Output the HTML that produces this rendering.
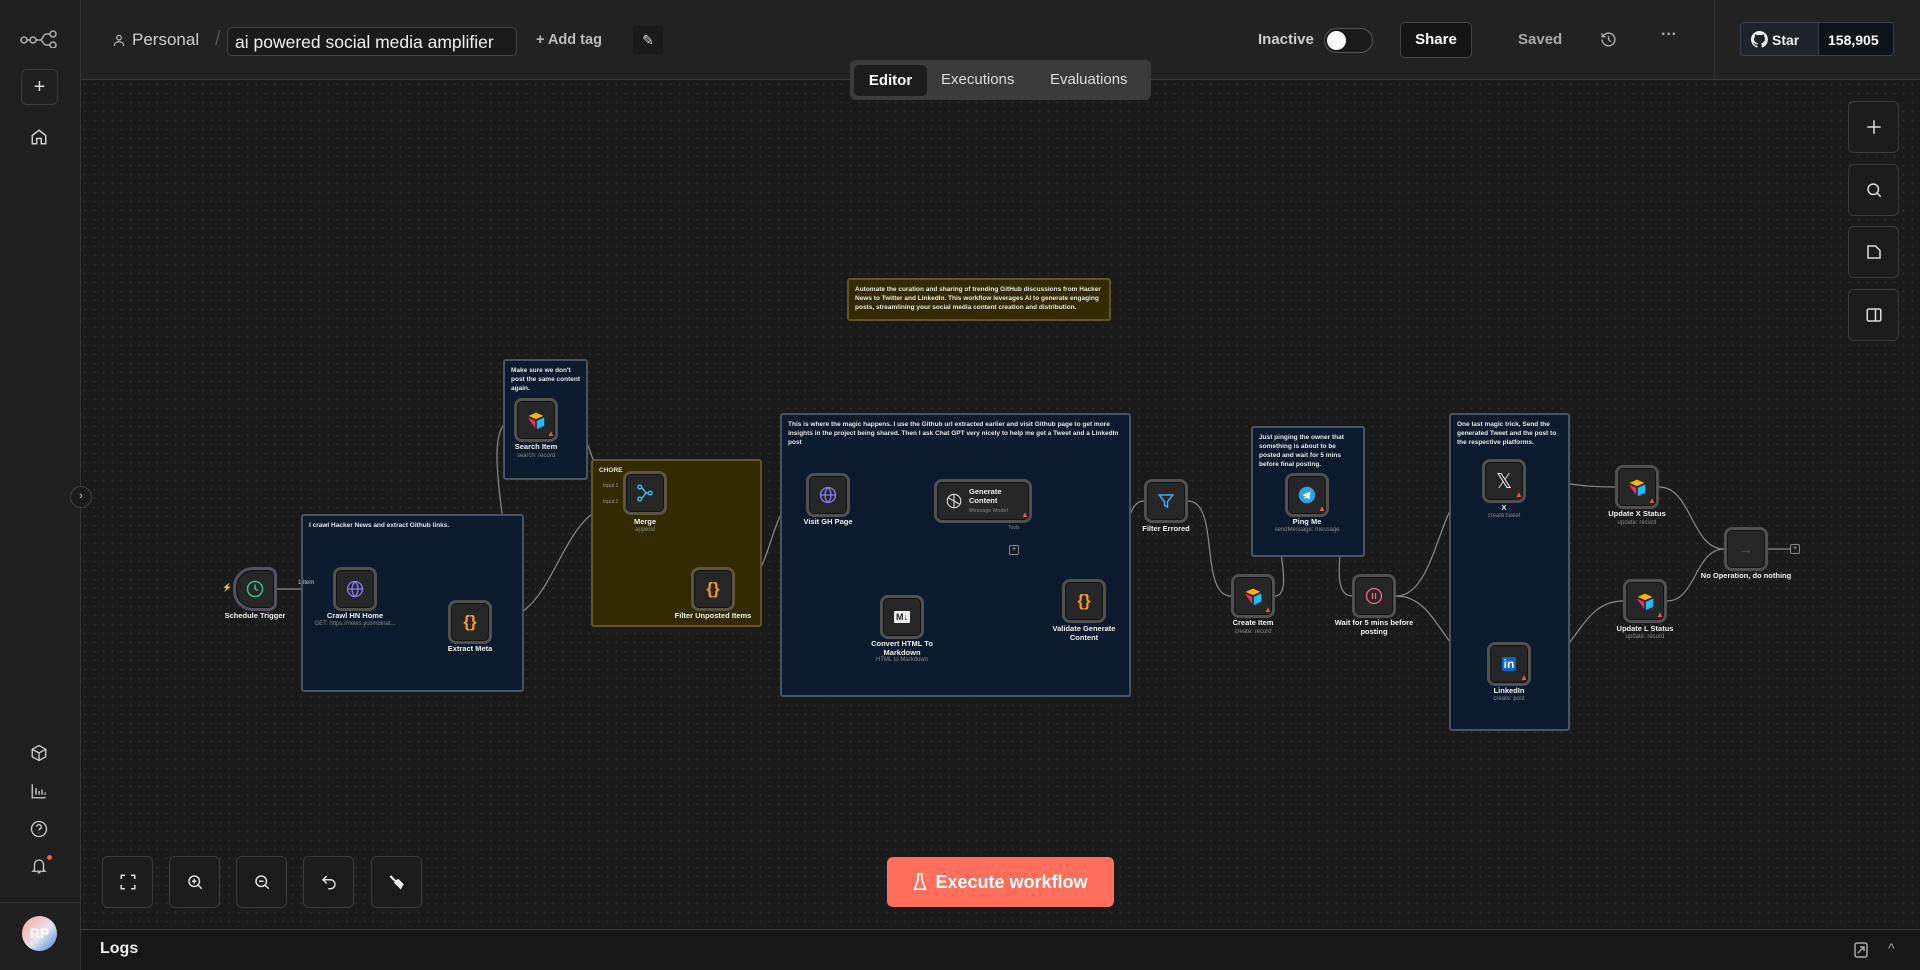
<!DOCTYPE html>
<html><head><meta charset="utf-8"><style>
*{box-sizing:border-box;margin:0;padding:0}
body{width:1920px;height:970px;overflow:hidden;background:#1b1b1b;font-family:"Liberation Sans",sans-serif;color:#ddd;position:relative}
.canvas{position:absolute;left:81px;top:80px;right:0;bottom:41px;background-color:#1a1a1a;background-image:radial-gradient(circle,#2e2e2e 0.8px,transparent 1px);background-size:9px 9px}
.side{position:absolute;left:0;top:0;width:81px;height:970px;background:#1f1f1f;border-right:1px solid #333}
.top{position:absolute;left:81px;top:0;right:0;height:80px;background:#222;border-bottom:1px solid #3a3a3a}
.logs{position:absolute;left:81px;right:0;top:929px;bottom:0;background:#171717;border-top:1px solid #3a3a3a}
.abs{position:absolute}
.btn{position:absolute;border:1px solid #3a3a3a;border-radius:6px;background:#1b1b1b;display:flex;align-items:center;justify-content:center}
.sticky{position:absolute;border:2px solid #4a5360;border-radius:3px;background:#0b1a2c;color:#e8e8e8;font-size:6.5px;line-height:9px;padding:5px 6px;font-weight:bold}
.sticky.y{background:#342a02;border-color:#5f5525}
.n{position:absolute;width:44px;height:44px;margin:-22px 0 0 -22px;border:3px solid #505050;border-radius:8px;background:#262626;box-shadow:inset 0 0 0 1px #111;display:flex;align-items:center;justify-content:center}
.n.c{border-color:#5a5440}
.l{position:absolute;transform:translateX(-50%);font-size:7.5px;font-weight:bold;color:#f0f0f0;white-space:nowrap;text-align:center;line-height:9px}
.s{position:absolute;transform:translateX(-50%);font-size:6px;color:#8a8a8a;white-space:nowrap}
.w{position:absolute;font-size:8px;color:#e55}
</style></head><body>
<div class="canvas"></div>
<svg class="abs" style="left:0;top:0" width="1920" height="970" fill="none" stroke="#8a8a8a" stroke-width="1.2">
<path d="M277 589 L333 589"/>
<path d="M377 589 C412 589,413 622,448 622"/>
<path d="M492 622 C540 622,466 420,514 420"/>
<path d="M492 622 C560 622,556 503,623 503"/>
<path d="M558 420 C600 420,582 487,623 487"/>
<path d="M667 493 C700 493,658 589,691 589"/>
<path d="M735 589 C775 589,766 495,806 495"/>
<path d="M850 495 C880 495,850 617,880 617"/>
<path d="M924 617 C954 617,904 501,934 501"/>
<path d="M1032 501 C1062 501,1032 601,1062 601"/>
<path d="M1106 601 C1136 601,1114 501,1144 501"/>
<path d="M1188 501 C1220 501,1199 596,1231 596"/>
<path d="M1275 596 C1300 596,1260 495,1285 495"/>
<path d="M1329 495 C1360 495,1321 596,1352 596"/>
<path d="M1396 596 C1440 596,1438 481,1482 481"/>
<path d="M1396 596 C1440 596,1443 664,1487 664"/>
<path d="M1526 481 C1570 481,1571 487,1615 487"/>
<path d="M1531 664 C1577 664,1577 601,1623 601"/>
<path d="M1659 487 C1692 487,1691 549,1724 549"/>
<path d="M1667 601 C1696 601,1695 549,1724 549"/>
<path d="M1768 549 L1790 549"/>
<path d="M1014 523 L1014 548"/>
</svg>

<!-- sticky notes -->
<div class="sticky y" style="left:847px;top:278px;width:264px;height:43px">Automate the curation and sharing of trending GitHub discussions from Hacker News to Twitter and LinkedIn. This workflow leverages AI to generate engaging posts, streamlining your social media content creation and distribution.</div>
<div class="sticky" style="left:503px;top:359px;width:85px;height:121px">Make sure we don't post the same content again.</div>
<div class="sticky" style="left:301px;top:514px;width:223px;height:178px">I crawl Hacker News and extract Github links.</div>
<div class="sticky y" style="left:591px;top:459px;width:171px;height:168px">CHORE</div>
<div class="sticky" style="left:780px;top:413px;width:351px;height:284px">This is where the magic happens. I use the Github url extracted earlier and visit Github page to get more insights in the project being shared. Then I ask Chat GPT very nicely to help me get a Tweet and a LinkedIn post</div>
<div class="sticky" style="left:1251px;top:426px;width:114px;height:131px">Just pinging the owner that something is about to be posted and wait for 5 mins before final posting.</div>
<div class="sticky" style="left:1449px;top:413px;width:121px;height:318px">One last magic trick, Send the generated Tweet and the post to the respective platforms.</div>

<!-- nodes -->
<div class="n" style="left:255px;top:589px;border-radius:20px 8px 8px 20px;border-color:#565060"><svg width="18" height="18" viewBox="0 0 24 24" fill="none" stroke="#34c08a" stroke-width="2"><circle cx="12" cy="12" r="10"/><path d="M12 6v6l4 2"/></svg></div>
<div class="l" style="left:255px;top:611px">Schedule Trigger</div>
<div class="abs" style="left:298px;top:580px;font-size:6px;color:#ccc">1 item</div>
<div class="abs" style="left:222px;top:583px;font-size:8px;color:#e55">⚡</div>

<div class="n" style="left:355px;top:589px"><svg width="18" height="18" viewBox="0 0 24 24" fill="none" stroke="#8a7cf5" stroke-width="1.8"><circle cx="12" cy="12" r="10"/><path d="M2 12h20M12 2c3 3 4 7 4 10s-1 7-4 10c-3-3-4-7-4-10s1-7 4-10"/></svg></div>
<div class="l" style="left:355px;top:611px">Crawl HN Home</div><div class="s" style="left:355px;top:621px">GET: https://news.ycombinat...</div>

<div class="n" style="left:470px;top:622px"><span style="color:#ff9a1f;font-size:17px;font-weight:bold">{}</span></div>
<div class="l" style="left:470px;top:644px">Extract Meta</div>

<div class="n" style="left:536px;top:420px"><svg width="20" height="18" viewBox="0 0 24 22"><path d="M12 2l9 4-9 4-9-4z" fill="#fcb400"/><path d="M13 12l9-4v10l-9 4z" fill="#18bfff"/><path d="M2 8l9 4v9z" fill="#f82b60"/></svg><span class="w" style="left:30px;top:28px">▲</span></div>
<div class="l" style="left:536px;top:442px">Search Item</div><div class="s" style="left:536px;top:453px">search: record</div>

<div class="n c" style="left:645px;top:493px"><svg width="18" height="18" viewBox="0 0 24 24" fill="none" stroke="#3db8d8" stroke-width="2"><circle cx="5" cy="4" r="2.5"/><circle cx="5" cy="20" r="2.5"/><circle cx="19" cy="12" r="2.5"/><path d="M7 5c5 2 3 7 9 7M7 19c5-2 3-7 9-7"/></svg></div>
<div class="l" style="left:645px;top:517px">Merge</div><div class="s" style="left:645px;top:527px">append</div>
<div class="abs" style="left:603px;top:483px;font-size:5px;color:#999">Input 1</div>
<div class="abs" style="left:603px;top:499px;font-size:5px;color:#999">Input 2</div>

<div class="n c" style="left:713px;top:589px"><span style="color:#ff9a1f;font-size:17px;font-weight:bold">{}</span></div>
<div class="l" style="left:713px;top:611px">Filter Unposted Items</div>

<div class="n" style="left:828px;top:495px"><svg width="18" height="18" viewBox="0 0 24 24" fill="none" stroke="#8a7cf5" stroke-width="1.8"><circle cx="12" cy="12" r="10"/><path d="M2 12h20M12 2c3 3 4 7 4 10s-1 7-4 10c-3-3-4-7-4-10s1-7 4-10"/></svg></div>
<div class="l" style="left:828px;top:517px">Visit GH Page</div>

<div class="n" style="left:902px;top:617px"><span style="background:#eee;color:#222;font-size:9px;font-weight:bold;padding:1px 2px;border-radius:1px">M↓</span></div>
<div class="l" style="left:902px;top:639px">Convert HTML To<br>Markdown</div><div class="s" style="left:902px;top:657px">HTML to Markdown</div>

<div class="n" style="left:934px;top:479px;margin:0;width:98px;height:44px;justify-content:flex-start;padding-left:8px"><svg width="18" height="18" viewBox="0 0 24 24" fill="none" stroke="#ddd" stroke-width="1.5"><circle cx="12" cy="12" r="9"/><path d="M12 3v9l7 4M5 8l7 4M12 21v-9"/></svg><div style="margin-left:6px;font-size:7.5px;font-weight:bold;color:#eee;line-height:9px">Generate<br>Content<br><span style="font-size:5.5px;color:#888;font-weight:normal">Message Model</span></div><span class="w" style="left:84px;top:28px">▲</span></div>
<div class="abs" style="left:1008px;top:525px;font-size:5px;color:#888">Tools</div>
<div class="abs" style="left:1009px;top:545px;width:10px;height:10px;border:1px solid #888;border-radius:2px;font-size:7px;line-height:8px;text-align:center;color:#ccc">+</div>

<div class="n" style="left:1084px;top:601px"><span style="color:#ff9a1f;font-size:17px;font-weight:bold">{}</span></div>
<div class="l" style="left:1084px;top:624px">Validate Generate<br>Content</div>

<div class="n" style="left:1166px;top:501px"><svg width="18" height="18" viewBox="0 0 24 24" fill="none" stroke="#4ba6f5" stroke-width="2"><path d="M3 4h18l-7 9v7l-4-2v-5z"/></svg></div>
<div class="l" style="left:1166px;top:524px">Filter Errored</div>

<div class="n" style="left:1253px;top:596px"><svg width="20" height="18" viewBox="0 0 24 22"><path d="M12 2l9 4-9 4-9-4z" fill="#fcb400"/><path d="M13 12l9-4v10l-9 4z" fill="#18bfff"/><path d="M2 8l9 4v9z" fill="#f82b60"/></svg><span class="w" style="left:30px;top:28px">▲</span></div>
<div class="l" style="left:1253px;top:618px">Create Item</div><div class="s" style="left:1253px;top:629px">create: record</div>

<div class="n" style="left:1307px;top:495px"><svg width="18" height="18" viewBox="0 0 24 24"><circle cx="12" cy="12" r="11" fill="#2aa3e0"/><path d="M6 12l11-5-2 11-4-3-2 3v-4z" fill="#fff"/></svg><span class="w" style="left:30px;top:28px">▲</span></div>
<div class="l" style="left:1307px;top:517px">Ping Me</div><div class="s" style="left:1307px;top:527px">sendMessage: message</div>

<div class="n" style="left:1374px;top:596px"><svg width="18" height="18" viewBox="0 0 24 24" fill="none" stroke="#f06a8a" stroke-width="1.8"><circle cx="12" cy="12" r="10"/><path d="M10 8v8M14 8v8"/></svg></div>
<div class="l" style="left:1374px;top:618px">Wait for 5 mins before<br>posting</div>

<div class="n" style="left:1504px;top:481px"><span style="color:#eee;font-size:20px;font-family:'DejaVu Sans',sans-serif">𝕏</span><span class="w" style="left:30px;top:28px">▲</span></div>
<div class="l" style="left:1504px;top:503px">X</div><div class="s" style="left:1504px;top:513px">create:tweet</div>

<div class="n" style="left:1509px;top:664px"><span style="background:#0a66c2;color:#fff;font-size:12px;font-weight:bold;padding:0 2px;border-radius:2px">in</span><span class="w" style="left:30px;top:28px">▲</span></div>
<div class="l" style="left:1509px;top:686px">LinkedIn</div><div class="s" style="left:1509px;top:696px">create: post</div>

<div class="n" style="left:1637px;top:487px"><svg width="20" height="18" viewBox="0 0 24 22"><path d="M12 2l9 4-9 4-9-4z" fill="#fcb400"/><path d="M13 12l9-4v10l-9 4z" fill="#18bfff"/><path d="M2 8l9 4v9z" fill="#f82b60"/></svg><span class="w" style="left:30px;top:28px">▲</span></div>
<div class="l" style="left:1637px;top:509px">Update X Status</div><div class="s" style="left:1637px;top:520px">update: record</div>

<div class="n" style="left:1645px;top:601px"><svg width="20" height="18" viewBox="0 0 24 22"><path d="M12 2l9 4-9 4-9-4z" fill="#fcb400"/><path d="M13 12l9-4v10l-9 4z" fill="#18bfff"/><path d="M2 8l9 4v9z" fill="#f82b60"/></svg><span class="w" style="left:30px;top:28px">▲</span></div>
<div class="l" style="left:1645px;top:624px">Update L Status</div><div class="s" style="left:1645px;top:634px">update: record</div>

<div class="n" style="left:1746px;top:549px"><span style="color:#555;font-size:14px">→</span></div>
<div class="l" style="left:1746px;top:571px">No Operation, do nothing</div>
<div class="abs" style="left:1790px;top:544px;width:10px;height:10px;border:1px solid #888;border-radius:2px;font-size:7px;line-height:8px;text-align:center;color:#ccc">+</div>

<!-- sidebar -->
<div class="side">
<svg class="abs" style="left:20px;top:30px" width="38" height="18" viewBox="0 0 38 18" fill="none" stroke="#aaa" stroke-width="1.6"><circle cx="4" cy="10" r="3"/><circle cx="13" cy="10" r="3"/><circle cx="33" cy="4" r="3"/><circle cx="33" cy="15" r="3"/><path d="M7 10h3M16 10h4c3 0 3-6 6-6h4M20 10c3 0 3 5 6 5h4"/></svg>
<div class="btn" style="left:21px;top:69px;width:37px;height:36px;background:#1f1f1f;color:#ddd;font-size:20px">+</div>
<svg class="abs" style="left:30px;top:128px" width="18" height="18" viewBox="0 0 24 24" fill="none" stroke="#ccc" stroke-width="2"><path d="M3 10l9-7 9 7v11h-6v-7h-6v7H3z"/></svg>
<svg class="abs" style="left:30px;top:744px" width="18" height="18" viewBox="0 0 24 24" fill="none" stroke="#ccc" stroke-width="1.8"><path d="M12 2l9 5v10l-9 5-9-5V7z M3 7l9 5 9-5M12 12v10"/></svg>
<svg class="abs" style="left:30px;top:782px" width="18" height="18" viewBox="0 0 24 24" fill="none" stroke="#ccc" stroke-width="1.8"><path d="M3 3v18h18M8 8v9M12 12v5M16 10v7M20 14v3"/></svg>
<svg class="abs" style="left:30px;top:820px" width="18" height="18" viewBox="0 0 24 24" fill="none" stroke="#ccc" stroke-width="1.8"><circle cx="12" cy="12" r="10"/><path d="M9 9a3 3 0 1 1 4 3c-1 .5-1 1-1 2M12 17v.5"/></svg>
<svg class="abs" style="left:30px;top:857px" width="18" height="18" viewBox="0 0 24 24" fill="none" stroke="#ccc" stroke-width="1.8"><path d="M6 17V10a6 6 0 0 1 12 0v7l2 2H4zM10 21h4"/></svg>
<div class="abs" style="left:47px;top:855px;width:5px;height:5px;border-radius:50%;background:#f55"></div>
<div class="abs" style="left:0;top:902px;width:80px;border-top:1px solid #333"></div>
<div class="abs" style="left:22px;top:916px;width:35px;height:35px;border-radius:50%;background:linear-gradient(135deg,#f3b9b9 20%,#e6e6ee 55%,#3b7ed8);color:#fff;font-weight:bold;font-size:14px;text-align:center;line-height:35px">RP</div>
</div>
<div class="abs" style="left:70px;top:486px;width:22px;height:22px;border-radius:50%;background:#1b1b1b;border:1px solid #444;color:#ccc;font-size:11px;text-align:center;line-height:19px">›</div>

<!-- top bar -->
<div class="top">
<svg class="abs" style="left:31px;top:32px" width="14" height="16" viewBox="0 0 24 24" fill="none" stroke="#bbb" stroke-width="2"><circle cx="12" cy="8" r="4"/><path d="M4 22c0-5 4-7 8-7s8 2 8 7"/></svg>
<div class="abs" style="left:51px;top:30px;font-size:17px;color:#ccc">Personal</div>
<div class="abs" style="left:134px;top:28px;font-size:20px;color:#555">/</div>
<div class="abs" style="left:146px;top:27px;width:290px;height:29px;border:1px solid #444;border-radius:5px;background:#1a1a1a;color:#f0f0f0;font-size:17.5px;padding:4px 7px;white-space:nowrap">ai powered social media amplifier</div>
<div class="abs" style="left:455px;top:32px;font-size:14.5px;color:#bbb;font-weight:bold">+ Add tag</div>
<div class="abs" style="left:552px;top:25px;width:30px;height:30px;border-radius:5px;background:#1a1a1a;color:#ddd;font-size:14px;text-align:center;line-height:30px">✎</div>
<div class="abs" style="left:1177px;top:31px;font-size:15px;color:#ccc;font-weight:bold">Inactive</div>
<div class="abs" style="left:1243px;top:28px;width:49px;height:25px;border-radius:13px;background:#1a1a1a;border:1px solid #555"><div style="margin:2px;width:19px;height:19px;border-radius:50%;background:#fff"></div></div>
<div class="abs" style="left:1319px;top:22px;width:72px;height:36px;border:1px solid #444;border-radius:5px;background:#151515;color:#fff;font-weight:bold;font-size:15px;text-align:center;line-height:34px">Share</div>
<div class="abs" style="left:1437px;top:31px;font-size:15px;color:#aaa;font-weight:bold">Saved</div>
<svg class="abs" style="left:1519px;top:31px" width="17" height="17" viewBox="0 0 24 24" fill="none" stroke="#aaa" stroke-width="2"><path d="M3 12a9 9 0 1 0 3-6.7L3 8M3 3v5h5M12 7v5l3 3"/></svg>
<div class="abs" style="left:1580px;top:26px;font-size:16px;color:#aaa;font-weight:bold">···</div>
<div class="abs" style="left:1633px;top:0;height:79px;border-left:1px solid #333"></div>
<div class="abs" style="left:1659px;top:22px;width:154px;height:34px;border:1px solid #3a4048;border-radius:4px;background:#1e232b;overflow:hidden">
<div class="abs" style="left:77px;top:0;width:77px;height:34px;background:#0f131a;border-left:1px solid #3a4048"></div>
<svg class="abs" style="left:10px;top:8px" width="17" height="17" viewBox="0 0 16 16"><path fill="#eee" d="M8 0a8 8 0 0 0-2.5 15.6c.4 0 .5-.2.5-.4v-1.5c-2.2.5-2.7-1-2.7-1-.4-.9-.9-1.2-.9-1.2-.7-.5.1-.5.1-.5.8.1 1.2.8 1.2.8.7 1.3 1.9.9 2.3.7.1-.5.3-.9.5-1.1-1.8-.2-3.6-.9-3.6-4 0-.9.3-1.6.8-2.1-.1-.2-.4-1 .1-2.1 0 0 .7-.2 2.2.8a7.500 7.500 0 0 1 4 0c1.5-1 2.2-.8 2.2-.8.4 1.100.2 1.900.1 2.100.5.6.8 1.300.8 2.100 0 3.100-1.900 3.800-3.600 4 .3.3.6.8.6 1.500v2.200c0 .2.1.5.6.4A8 8 0 0 0 8 0z"/></svg>
<div class="abs" style="left:31px;top:9px;font-size:14px;font-weight:bold;color:#eee">Star</div>
<div class="abs" style="left:87px;top:9px;font-size:14px;font-weight:bold;color:#fff">158,905</div>
</div>
</div>
<!-- tabs -->
<div class="abs" style="left:850px;top:60px;width:301px;height:40px;background:#3a3a3a;border-radius:6px"></div>
<div class="abs" style="left:854px;top:65px;width:73px;height:31px;background:#1c1c1c;border-radius:5px;color:#fff;font-weight:bold;font-size:15px;text-align:center;line-height:31px">Editor</div>
<div class="abs" style="left:941px;top:71px;font-size:15px;color:#ddd">Executions</div>
<div class="abs" style="left:1050px;top:71px;font-size:15px;color:#ddd">Evaluations</div>

<!-- right toolbar -->
<div class="btn" style="left:1848px;top:101px;width:51px;height:52px"><svg width="18" height="18" viewBox="0 0 24 24" stroke="#ddd" stroke-width="2"><path d="M12 3v18M3 12h18"/></svg></div>
<div class="btn" style="left:1848px;top:164px;width:51px;height:52px"><svg width="18" height="18" viewBox="0 0 24 24" fill="none" stroke="#ddd" stroke-width="2"><circle cx="11" cy="11" r="7"/><path d="M16 16l5 5"/></svg></div>
<div class="btn" style="left:1848px;top:226px;width:51px;height:52px"><svg width="18" height="18" viewBox="0 0 24 24" fill="none" stroke="#ddd" stroke-width="2"><path d="M4 4h10l6 6v10H4z"/></svg></div>
<div class="btn" style="left:1848px;top:289px;width:51px;height:52px"><svg width="18" height="18" viewBox="0 0 24 24" fill="none" stroke="#ddd" stroke-width="2"><rect x="3" y="4" width="18" height="16" rx="2"/><path d="M14 4v16"/></svg></div>

<!-- bottom controls -->
<div class="btn" style="left:102px;top:856px;width:51px;height:52px"><svg width="18" height="18" viewBox="0 0 24 24" fill="none" stroke="#ddd" stroke-width="2"><path d="M3 8V3h5M16 3h5v5M21 16v5h-5M8 21H3v-5"/></svg></div>
<div class="btn" style="left:169px;top:856px;width:51px;height:52px"><svg width="18" height="18" viewBox="0 0 24 24" fill="none" stroke="#ddd" stroke-width="2"><circle cx="11" cy="11" r="7"/><path d="M16 16l5 5M11 8v6M8 11h6"/></svg></div>
<div class="btn" style="left:236px;top:856px;width:51px;height:52px"><svg width="18" height="18" viewBox="0 0 24 24" fill="none" stroke="#ddd" stroke-width="2"><circle cx="11" cy="11" r="7"/><path d="M16 16l5 5M8 11h6"/></svg></div>
<div class="btn" style="left:303px;top:856px;width:51px;height:52px"><svg width="18" height="18" viewBox="0 0 24 24" fill="none" stroke="#ddd" stroke-width="2"><path d="M9 14L4 9l5-5M4 9h10a6 6 0 0 1 0 12h-3"/></svg></div>
<div class="btn" style="left:371px;top:856px;width:51px;height:52px"><svg width="18" height="18" viewBox="0 0 24 24" fill="#eee"><path d="M4 3l6 6-2 2-6-6z"/><path d="M9 10l5-2 7 7-4 7-9-9z"/></svg></div>

<div class="abs" style="left:887px;top:857px;width:227px;height:50px;background:#ff6f5c;border-radius:6px;color:#fff;font-size:18px;font-weight:bold;display:flex;align-items:center;justify-content:center;gap:8px"><svg width="14" height="18" viewBox="0 0 14 20" fill="none" stroke="#fff" stroke-width="1.8"><path d="M4 1h6M5 1v6L1 18h12L9 7V1"/></svg>Execute workflow</div>

<!-- logs -->
<div class="logs">
<div class="abs" style="left:19px;top:10px;font-size:16px;font-weight:bold;color:#eee">Logs</div>
<svg class="abs" style="left:1773px;top:12px" width="14" height="16" viewBox="0 0 14 16" fill="none" stroke="#aaa" stroke-width="1.5"><rect x="1" y="1" width="12" height="14" rx="2"/><path d="M4 11l6-6M6 5h4v4"/></svg>
<div class="abs" style="left:1807px;top:10px;font-size:14px;color:#aaa">^</div>
</div>
</body></html>
